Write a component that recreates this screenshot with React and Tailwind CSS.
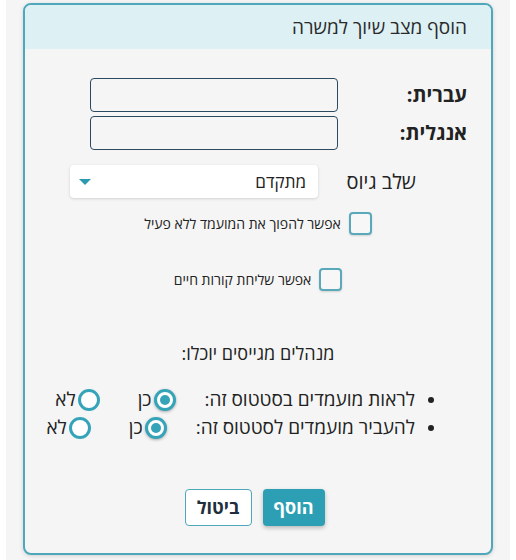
import { useState } from "react";

function Radio({ checked, label }) {
  return (
    <div className="flex items-center gap-[2px]">
      <span
        className={
          "flex h-[22px] w-[22px] items-center justify-center rounded-full border-[3px] border-[#35a3b8] bg-white " +
          (checked ? "shadow-[0_1px_3px_rgba(0,0,0,0.3)]" : "")
        }
      >
        {checked && <span className="h-[10px] w-[10px] rounded-full bg-[#35a3b8]" />}
      </span>
      <span>{label}</span>
    </div>
  );
}

function Checkbox({ label }) {
  return (
    <div className="flex items-center justify-center gap-[8px]">
      <span className="h-[23px] w-[23px] rounded-[4px] border-2 border-[#5aa9ba] bg-[#f7f7f7] shadow-[0_1px_2px_rgba(0,0,0,0.15)]" />
      <span className="text-[14px] text-[#222]">{label}</span>
    </div>
  );
}

export default function App() {
  const [stage] = useState("מתקדם");

  const rows = [
    { text: "לראות מועמדים בסטטוס זה:" },
    { text: "להעביר מועמדים לסטטוס זה:" },
  ];

  return (
    <div
      dir="rtl"
      className="h-[560px] w-[516px] bg-white px-[6px]"
      style={{ fontFamily: '"Open Sans", "Noto Sans", sans-serif' }}
    >
      <div className="h-full bg-[#f5f5f5] px-[17px] pt-[3px]">
        <div className="overflow-hidden rounded-[8px] border-2 border-[#4ea7ba] bg-[#f5f5f5] shadow-[0_1px_4px_rgba(0,0,0,0.15)]">
          {/* Header */}
          <div className="flex h-[44px] items-center bg-[#ddf0f4] pr-[24px] text-[19px] text-[#2a2a2a]">
            הוסף מצב שיוך למשרה
          </div>

          {/* Body */}
          <div className="pb-[27px] pt-[29px] text-[#222]">
            <div className="flex flex-col gap-[4px] pr-[24px]">
              <div className="flex items-center">
                <label className="w-[129px] text-[20px] font-bold">עברית:</label>
                <input className="h-[34px] w-[248px] rounded-[4px] border border-[#2b4a60] bg-[#f5f5f5]" />
              </div>
              <div className="flex items-center">
                <label className="w-[129px] text-[20px] font-bold">אנגלית:</label>
                <input className="h-[34px] w-[248px] rounded-[4px] border border-[#2b4a60] bg-[#f5f5f5]" />
              </div>
            </div>

            <div className="mt-[15px] flex items-center pr-[75px]">
              <span className="w-[98px] text-[20px]">שלב גיוס</span>
              <div className="flex h-[33px] w-[248px] items-center justify-between rounded-[4px] bg-white pl-[8px] pr-[12px] text-[17px] shadow-[0_1px_3px_rgba(0,0,0,0.15)]">
                <span>{stage}</span>
                <svg width="14" height="8" viewBox="0 0 14 8">
                  <path d="M1 1 L13 1 L7 7 Z" fill="#2b9ab1" />
                </svg>
              </div>
            </div>

            <div className="mt-[14px]">
              <Checkbox label="אפשר להפוך את המועמד ללא פעיל" />
            </div>
            <div className="mt-[33px]">
              <Checkbox label="אפשר שליחת קורות חיים" />
            </div>

            <div className="mt-[49px] text-center text-[18px]">מנהלים מגייסים יוכלו:</div>

            <div className="mt-[20px] flex flex-col gap-[3px] pr-[57px] text-[19px]">
              {rows.map((r, i) => (
                <div key={i} className="flex h-[25px] items-center">
                  <span className="ml-[13px] h-[6px] w-[6px] rounded-full bg-[#222]" />
                  <span className="ml-[29px]">{r.text}</span>
                  <div className="ml-[38px]">
                    <Radio checked label="כן" />
                  </div>
                  <Radio checked={false} label="לא" />
                </div>
              ))}
            </div>

            <div className="mt-[49px] flex justify-center gap-[11px] pr-[7px]">
              <button className="h-[37px] w-[62px] rounded-[4px] bg-[#2c9fb4] text-[18px] font-bold text-white shadow-[0_2px_4px_rgba(0,0,0,0.25)]">
                הוסף
              </button>
              <button className="h-[37px] w-[67px] rounded-[4px] border border-[#4ea7ba] bg-white text-[18px] font-bold text-[#1f2f3d]">
                ביטול
              </button>
            </div>
          </div>
        </div>
      </div>
    </div>
  );
}
